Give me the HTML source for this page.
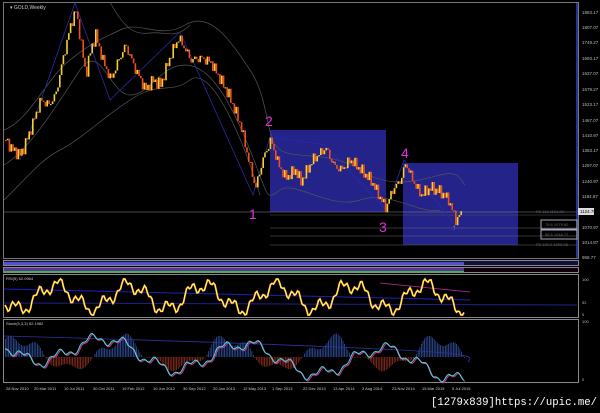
<!DOCTYPE html><html><head><meta charset="utf-8"><style>
html,body{margin:0;padding:0;background:#000;width:600px;height:413px;overflow:hidden}
svg{display:block;font-family:"Liberation Sans",sans-serif}
</style></head><body>
<svg id="s" width="600" height="413" viewBox="0 0 600 413">
<rect width="600" height="413" fill="#000"/>
<rect x="3.5" y="2.5" width="575" height="256" fill="none" stroke="#777" stroke-width="1"/>
<line x1="577" y1="3" x2="577" y2="258" stroke="#3344cc" stroke-width="1.5"/>
<text x="10" y="9" fill="#ccc" font-size="5">▾ GOLD,Weekly</text>
<rect x="270" y="130" width="116" height="82" fill="#23238a"/>
<rect x="403" y="163" width="115" height="82" fill="#23238a"/>
<g stroke="#888" stroke-width="0.6">
<line x1="4" y1="212" x2="577" y2="212"/>
<line x1="270" y1="215" x2="577" y2="215" stroke="#555"/>
<line x1="270" y1="228" x2="577" y2="228" stroke="#666"/>
<line x1="270" y1="236" x2="577" y2="236" stroke="#666"/>
<line x1="270" y1="245" x2="577" y2="245" stroke="#666"/>
</g>
<rect x="541" y="220" width="36" height="9" fill="none" stroke="#aab" stroke-width="1"/>
<rect x="541" y="230" width="36" height="9" fill="none" stroke="#aab" stroke-width="1"/>
<g fill="#666" font-size="4"><text x="545" y="226">78.6 1079.80</text><text x="545" y="236">88.6 1048.72</text><text x="536" y="213">FE 113 1121.20</text><text x="536" y="246">FE 100.0 1000.08</text></g>
<rect x="578" y="208" width="16" height="7" fill="#ddd"/><text x="580" y="213" font-size="4.5" fill="#000">1124.78</text>
<g fill="none" stroke="#555" stroke-width="0.7">
<path d="M4,130 C30,120 45,80 70,60 S100,40 120,30 S160,40 185,25 S230,40 250,70 S265,140 280,150 S330,150 360,170 S420,180 440,175 S460,180 465,185"/>
<path d="M4,165 C30,150 60,100 80,70 S110,95 130,95 S160,65 185,65 S230,100 250,150 S265,200 280,190 S330,210 360,200 S420,215 440,210"/>
<path d="M4,200 C25,180 40,160 60,150 S100,120 130,100 S170,95 190,80 S240,130 260,195"/>
<path d="M110,2 C125,30 135,35 150,33 S175,40 190,25"/>
</g>
<polyline fill="none" stroke="#2a2aa8" stroke-width="0.8" points="20,160 75,3 110,100 180,32 253,195 270,137 325,145 386,210 404,160 455,225"/>
<g id="c"></g>
<g fill="#e030e0" font-size="14"><text x="249" y="219">1</text><text x="265" y="126">2</text><text x="379" y="232">3</text><text x="401" y="158">4</text></g>
<text x="452" y="230" fill="#4aa0ff" font-size="8">↑</text>
<g fill="#bbb" font-size="4.5">
<text x="582" y="14">1863.17</text><text x="582" y="29">1807.07</text><text x="582" y="44">1749.27</text><text x="582" y="60">1693.17</text><text x="582" y="75">1637.07</text><text x="582" y="91">1579.27</text><text x="582" y="106">1523.17</text><text x="582" y="122">1467.07</text><text x="582" y="137">1410.97</text><text x="582" y="152">1353.17</text><text x="582" y="167">1297.07</text><text x="582" y="183">1240.97</text><text x="582" y="198">1184.87</text><text x="582" y="229">1070.97</text><text x="582" y="244">1014.87</text><text x="582" y="259">958.77</text>
</g>
<rect x="3.5" y="260.5" width="575" height="5" fill="#101040" stroke="#888" stroke-width="1"/>
<rect x="4" y="262" width="460" height="3" fill="#5050d0"/>
<rect x="3.5" y="267.5" width="575" height="5" fill="#100010" stroke="#888" stroke-width="1"/>
<rect x="4" y="268" width="460" height="4" fill="#6030a0"/>
<rect x="4" y="271" width="460" height="1.5" fill="#30c030"/>
<rect x="3.5" y="274.5" width="575" height="43" fill="none" stroke="#888" stroke-width="1"/>
<text x="6" y="280" fill="#ccc" font-size="4">RSI(5) 52.0964</text>
<line x1="4" y1="289" x2="470" y2="300" stroke="#2020c0"/>
<line x1="4" y1="303" x2="577" y2="305" stroke="#202090"/>
<line x1="380" y1="283" x2="470" y2="292" stroke="#c030a0" stroke-width="0.7"/>
<polyline id="rsim" fill="none" stroke="#c020c0" stroke-width="2"/>
<polyline id="rsi" fill="none" stroke="#ffff20" stroke-width="1.4"/>
<g fill="#bbb" font-size="4"><text x="582" y="281">100</text><text x="582" y="304">52</text><text x="582" y="316">0</text></g>
<rect x="3.5" y="319.5" width="575" height="63" fill="none" stroke="#888" stroke-width="1"/>
<text x="6" y="325" fill="#ccc" font-size="4">Stoch(5,3,3) 52.1982</text>
<g id="h"></g>
<path d="M4,336 C150,340 300,345 400,350 S460,360 470,362" fill="none" stroke="#3030a0" stroke-width="0.8"/>
<polyline id="st2" fill="none" stroke="#e03090" stroke-width="1"/>
<polyline id="st" fill="none" stroke="#40e0e0" stroke-width="1"/>
<g fill="#bbb" font-size="4"><text x="582" y="323">100</text><text x="582" y="381">0</text></g>
<g fill="#ccc" font-size="4">
<text x="6" y="390">28 Nov 2010</text><text x="34" y="390">20 Mar 2011</text><text x="64" y="390">10 Jul 2011</text><text x="93" y="390">30 Oct 2011</text><text x="122" y="390">19 Feb 2012</text><text x="153" y="390">10 Jun 2012</text><text x="183" y="390">30 Sep 2012</text><text x="213" y="390">20 Jan 2013</text><text x="243" y="390">12 May 2013</text><text x="272" y="390">1 Sep 2013</text><text x="303" y="390">22 Dec 2013</text><text x="333" y="390">13 Apr 2014</text><text x="362" y="390">3 Aug 2014</text><text x="392" y="390">23 Nov 2014</text><text x="422" y="390">15 Mar 2015</text><text x="452" y="390">5 Jul 2015</text>
</g>
<text x="431" y="405" fill="#fff" font-size="11" font-family="Liberation Mono, monospace" textLength="166" lengthAdjust="spacingAndGlyphs">[1279x839]https://upic.me/</text>
</svg>
<script>
var ns="http://www.w3.org/2000/svg";
var P=[[5,140],[12,150],[20,155],[28,135],[40,100],[48,105],[55,95],[62,60],[70,25],[75,10],[80,40],[85,75],[90,50],[95,35],[102,60],[110,80],[118,60],[125,45],[135,70],[145,90],[152,80],[160,85],[170,55],[178,38],[185,50],[190,60],[200,58],[210,62],[220,80],[228,95],[240,125],[248,160],[255,188],[262,160],[270,140],[278,165],[285,178],[295,170],[300,182],[312,160],[325,148],[333,165],[340,170],[350,160],[358,168],[370,180],[385,208],[392,190],[400,180],[405,163],[412,180],[420,195],[430,188],[440,192],[448,200],[455,220],[462,212]];
function py(x){for(var i=1;i<P.length;i++){if(x<=P[i][0]){var a=P[i-1],b=P[i];return a[1]+(b[1]-a[1])*(x-a[0])/(b[0]-a[0]);}}return P[P.length-1][1];}
var c=document.getElementById('c'),prev=py(5);
for(var x=5;x<=462;x+=1.8){
 var y=py(x)+4*Math.sin(x*1.7)+3*Math.sin(x*0.9);
 var top=Math.min(prev,y)-2-2*Math.abs(Math.sin(x*2.3)),bot=Math.max(prev,y)+2+2*Math.abs(Math.cos(x*1.9));
 var up=y<prev;
 var w=document.createElementNS(ns,'rect');w.setAttribute('x',x+0.5);w.setAttribute('width',0.6);w.setAttribute('y',top);w.setAttribute('height',bot-top);w.setAttribute('fill',up?'#e8c040':'#d03a20');c.appendChild(w);
 var b=document.createElementNS(ns,'rect');b.setAttribute('x',x);b.setAttribute('width',1.6);b.setAttribute('y',Math.min(prev,y));b.setAttribute('height',Math.max(1.2,Math.abs(prev-y)));b.setAttribute('fill',up?'#f5d030':'#f05020');c.appendChild(b);
 prev=y;
}
var r=[],s=[],s2=[],h=document.getElementById('h');
for(var x=5;x<=465;x+=1.5){
 var y=297+12*Math.sin(x*0.085)+6*Math.sin(x*0.29)+3*Math.sin(x*0.9);
 y=Math.max(279,Math.min(315,y));
 r.push(x+','+y.toFixed(1));
 var t=350+(x/465)*15+14*Math.sin(x*0.045)+5*Math.sin(x*0.19)+2*Math.sin(x*0.6)-10*Math.exp(-x/40);
 s.push(x+','+t.toFixed(1));s2.push((x+1)+','+(t+1).toFixed(1));
}
for(var x=5;x<=465;x+=1.6){var v=18*Math.sin(x*0.06+0.5)+6*Math.sin(x*0.21);
  var e=document.createElementNS(ns,'rect');e.setAttribute('x',x);e.setAttribute('width',0.8);
  if(v>0){e.setAttribute('y',357-v);e.setAttribute('height',v);e.setAttribute('fill','#3050a0');}
  else{e.setAttribute('y',357);e.setAttribute('height',-v*0.6);e.setAttribute('fill','#903020');}
  h.appendChild(e);}
document.getElementById('rsi').setAttribute('points',r.join(' '));
document.getElementById('rsim').setAttribute('points',r.join(' '));
document.getElementById('st').setAttribute('points',s.join(' '));
document.getElementById('st2').setAttribute('points',s2.join(' '));
</script>
</body></html>
